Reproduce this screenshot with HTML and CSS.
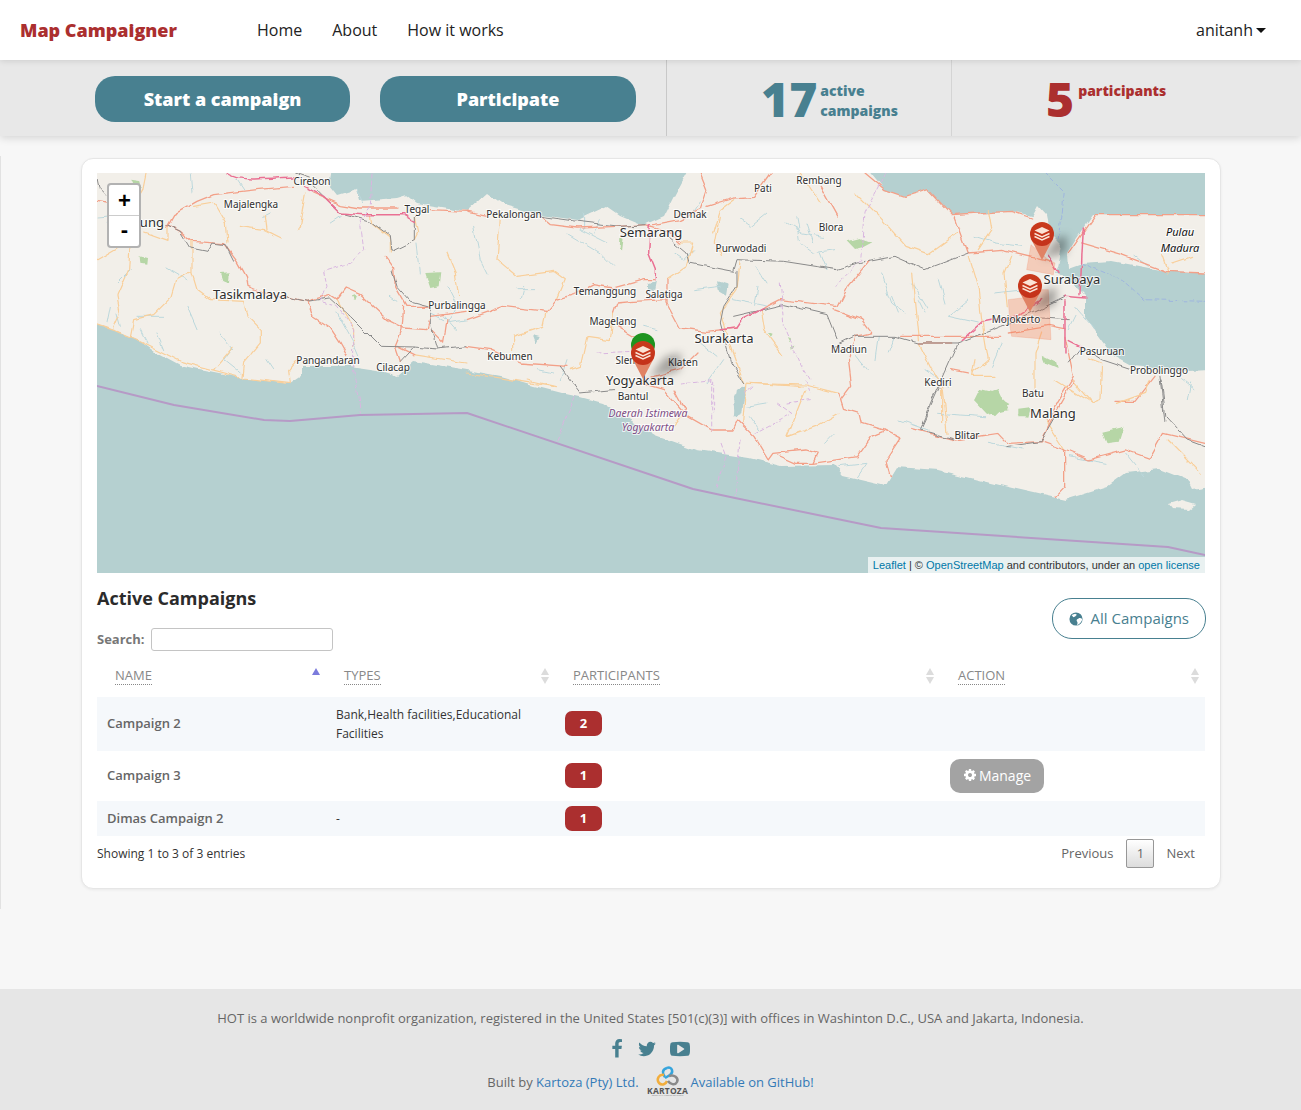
FILE: index.html
```html
<!DOCTYPE html>
<html lang="en">
<head>
  <meta charset="UTF-8">
  <meta name="viewport" content="width=device-width, initial-scale=1.0">
  <title>Map Campaigner</title>
  <link rel="stylesheet" href="styles.css">
</head>
<body>

  <nav class="navbar">
    <a class="brand" href="#">Map Campaigner</a>
    <ul class="nav-links">
      <li><a href="#">Home</a></li>
      <li><a href="#">About</a></li>
      <li><a href="#">How it works</a></li>
    </ul>
    <a class="user-menu" href="#">anitanh<span class="caret"></span></a>
  </nav>

  <div class="stats-bar">
    <div class="stats-actions">
      <a class="big-btn" href="#">Start a campaign</a>
      <a class="big-btn" href="#">Participate</a>
    </div>
    <div class="stat stat-active">
      <span class="stat-number">17</span>
      <span class="stat-label">active<br>campaigns</span>
    </div>
    <div class="stat stat-people">
      <span class="stat-number">5</span>
      <span class="stat-label">participants</span>
    </div>
  </div>

  <div class="content">
    <div class="card">

      <div class="map">
        <svg class="map-svg" viewBox="0 0 1108 400" width="1108" height="400">
          <defs>
            <filter id="blur-shadow" x="-50%" y="-50%" width="200%" height="200%"><feGaussianBlur stdDeviation="4"></feGaussianBlur></filter>
            <filter id="wobble" filterUnits="userSpaceOnUse" x="-6" y="-6" width="1120" height="412">
              <feTurbulence type="fractalNoise" baseFrequency="0.07" numOctaves="2" seed="4" result="noise"></feTurbulence>
              <feDisplacementMap in="SourceGraphic" in2="noise" scale="6" xChannelSelector="R" yChannelSelector="G"></feDisplacementMap>
              <feGaussianBlur stdDeviation="0.35"></feGaussianBlur>
            </filter>
            <linearGradient id="pin-head" x1="0" y1="0" x2="0" y2="1">
              <stop offset="0" stop-color="#c93a1c"></stop>
              <stop offset="1" stop-color="#c4321a"></stop>
            </linearGradient>
            <g id="pin">
              <path class="pin-tail" d="M-11 5 L0 26 L11 5 Z"></path>
              <circle r="12" fill="url(#pin-head)"></circle>
              <path class="pin-layer" d="M0 -7 L7.500 -3.500 L0 0 L-7.500 -3.500 Z"></path>
              <path class="pin-layer-line" d="M-7.500 -.5 L0 3 L7.500 -.5 M-7.500 2.500 L0 6 L7.500 2.500"></path>
            </g>
          </defs>

          <rect class="land" width="1108" height="400"></rect>

          <g filter="url(#wobble)">
            <!-- sea -->
            <path class="sea" d="M235 -5 L232 13 L240 23 L260 17 L263 28 L300 25 L310 22 L320 30 L370 38 L390 20 L407 32 L443 42 L480 47 L510 33 L523 42 L547 52 L567 43 L577 23 L592 -5 Z"></path>
            <path class="sea" d="M770 -5 L788 17 L808 23 L831 17 L855 42 L881 40 L915 38 L935 43 L941 32 L951 43 L955 63 L965 73 L961 93 L958 100 L978 113 L988 123 L988 143 L1001 163 L1015 182 L1035 193 L1091 198 L1113 197 L1113 100 L1068 98 L1015 88 L985 90 L971 95 L970 80 L978 67 L995 42 L1038 42 L1113 42 L1113 -5 Z"></path>
            <path class="sea" d="M-5 150 L20 158 L43 168 L57 178 L83 192 L97 195 L147 205 L193 211 L205 203 L205 193 L253 193 L280 197 L300 203 L317 188 L370 197 L403 203 L417 207 L437 213 L464 220 L483 224 L506 230 L530 245 L558 262 L600 277 L652 285 L685 293 L737 292 L746 302 L789 312 L800 294 L841 297 L911 314 L968 327 L1010 314 L1029 300 L1062 296 L1090 307 L1095 317 L1113 314 L1113 405 L-5 405 Z"></path>
            <path class="land" d="M1071 331 L1085 327 L1099 331 L1092 337 L1075 336 Z"></path>

            <!-- west tiles -->
            <g transform="scale(.3333)">
              <path class="park" d="M100 20 L130 25 L135 50 L110 45 Z M128 250 L150 255 L148 275 L130 272 Z M372 300 L395 298 L393 330 L380 325 Z M985 300 L1030 298 L1025 340 L1000 345 Z M765 370 L778 365 L772 382 Z"></path>
              <path class="rv" d="M0 135 L60 130 L30 150 M210 285 L270 320 M270 400 L300 470 M370 480 L410 530 M410 520 L380 560 L430 600 M510 560 L530 590 M720 420 L770 510 L785 545 M100 290 L60 330 M40 400 L30 450 M60 420 L70 460 M120 430 L200 430 M130 470 L150 510 M180 480 L200 530 M1050 340 L1080 400 L1050 450 L1110 440 M960 210 L970 300 M880 370 L900 385 M700 150 L730 130 M500 130 L520 120 M420 20 L440 50 M280 0 L285 60 M780 50 L800 90 M1040 430 L1075 470 M1000 420 L1040 440"></path>
              <path class="sec" d="M350 90 L385 150 L390 210 M285 205 L285 300 L300 350 L340 380 L440 385 L450 430 L490 470 L490 510 L440 570 L435 610 M285 295 L240 320 L225 370 L170 425 L110 440 L100 490 M100 200 L95 290 L60 370 L70 420 L50 465 M430 160 L500 170 L550 195 M505 125 L510 170 M625 60 L605 170 M210 160 L210 205 L140 180 M410 520 L350 590 M580 630 L575 590 L600 560 M1050 240 L1075 300 L1085 370 M820 125 L825 150 L880 195 L880 240 M955 130 L965 180 L955 200 M950 545 L1110 570 M0 260 L60 225 M350 90 L290 100 M720 378 L770 470 L770 520 M0 455 L60 475 L130 505 L250 565 L440 615 L580 632 M150 0 L140 50 L100 120"></path>
              <path class="rd" d="M210 160 L230 125 L300 85 L350 65 L480 50 L590 40 M210 155 L250 175 L285 205 L380 212 L420 265 L445 310 L450 340 L510 365 L570 372 L630 385 L700 365 L720 378 L745 345 L790 365 L870 440 L920 465 L990 470 L1000 430 L1110 415 M630 385 L645 430 L700 465 L730 510 L750 545 M920 400 L915 470 L895 520 L910 565 M865 250 L890 285 L895 340 L930 400 L1000 400 M1000 470 L1040 510 L1050 440 M0 85 L30 90 M650 60 L730 95 L790 105 L900 105 M950 545 L900 520 M1000 110 L1110 115"></path>
              <path class="rl" d="M650 40 L730 120 L820 145 L880 190 L885 235 L955 200 L955 130 M210 155 L250 175 L280 225 L330 235 L345 210 L385 215 L410 265 M570 372 L630 385 L700 375 L760 430 L850 520 L950 522 L1020 528 L1110 518 M885 290 L900 340 L940 385 L1000 400 L1000 460 L1020 528 M950 522 L910 565 M0 0 L10 50 L30 70 M595 0 L640 15"></path>
              <path class="mw" d="M390 0 Q420 20 470 18 T590 12 M620 40 L680 70 L730 120 L800 125 L920 125 L955 145"></path>
              <path class="bd" d="M825 0 L820 100 L790 145 L800 230 L760 270 L680 295 L690 340 L670 385 L720 400 L770 470 L770 590 L790 720"></path>
            </g>

            <!-- middle tiles -->
            <g transform="translate(370,0) scale(.3333)">
              <path class="park" d="M460 195 L470 195 L465 235 L458 225 Z M960 490 L972 492 L968 505 Z M905 480 L920 485 L915 495 Z M975 515 L985 520 L978 530 Z"></path>
              <path class="lake" d="M545 330 L570 325 L565 350 L548 350 Z M750 325 L785 335 L780 365 L755 350 Z M195 490 L215 495 L205 515 Z M810 650 L840 640 L830 700 L800 730 Z"></path>
              <path class="rv" d="M150 350 L200 350 M170 340 L160 380 M300 180 L400 240 L440 280 M340 170 L420 210 M350 120 L350 170 M400 140 L380 180 M620 240 L650 260 L680 230 M680 350 L760 340 M800 380 L900 400 M870 340 L860 400 M960 150 L1010 180 L1070 190 M1000 210 L1040 240 L1100 230 M1060 240 L1080 290 M680 120 L700 90 M820 140 L850 160 L900 120 M20 160 L40 260 L60 300 M700 510 L750 550 M720 630 L770 560 M840 700 L900 690 M210 590 L260 600 M530 460 L570 470 M300 560 L280 620 M990 130 L1000 200 M1020 150 L1040 210 M870 280 L900 330"></path>
              <path class="sec" d="M100 130 L90 260 L150 310 L260 295 L295 320 L270 380 M240 415 L230 460 L140 490 L140 530 M640 210 L680 210 L660 280 L600 320 M760 130 L745 210 L760 250 M820 260 L810 350 L760 420 L780 490 L830 630 L1000 640 M0 600 L260 640 M800 80 L760 110 L740 180 M1000 0 L1060 90 M840 630 L830 750 M440 420 L430 500 L360 490 L340 580 L310 590 M880 410 L890 470 L950 550"></path>
              <path class="rd" d="M0 118 L60 130 M220 130 L250 155 L330 165 L450 160 L540 155 M540 155 L600 175 L640 210 M0 440 L110 400 L240 415 L270 380 L320 365 L380 335 L440 345 L530 320 L560 320 M600 320 L600 390 L640 465 L720 475 L810 465 M880 410 L940 380 L1110 400 M0 520 L70 530 L160 570 L300 580 M440 420 L450 390 L500 385 L600 380 M690 540 L640 590 L560 610 L520 630 L590 650 L650 720 M700 0 L720 50 L700 110 L640 140 L560 155 M720 100 L800 75 L860 70 L910 0 M1060 40 L1110 130 M450 460 L500 490"></path>
              <path class="rl" d="M220 130 L330 145 L460 160 L540 155 M600 190 L660 240 L670 270 L800 295 L810 260 L950 265 L1110 290 M810 295 L810 340 L770 400 L760 450 L790 560 L830 630 M800 430 L950 395 L1080 425 L1110 500 M280 580 L340 660 L440 650"></path>
              <path class="mw" d="M550 155 L545 240 L565 290 L565 320 M760 470 L810 465 L830 435 L890 405"></path>
              <path class="bd" d="M940 330 L950 450 L1000 570 L1030 620 M390 540 L500 535 M640 630 L740 620 L740 720 M960 690 L1030 680 M800 690 L860 640"></path>
            </g>

            <!-- east tiles -->
            <g transform="translate(738,0) scale(.3333)">
              <path class="park" d="M38 205 L75 195 L112 208 L85 222 L60 228 Z M620 545 L660 565 L665 585 L630 570 Z M430 650 L470 660 L520 690 L480 730 L440 700 L415 680 Z M550 710 L590 705 L580 730 L550 730 Z"></path>
              <path class="rv" d="M140 300 L170 390 L210 420 M230 330 L280 410 M310 320 L330 390 M400 380 L340 430 L430 450 M480 360 L570 350 M420 190 L480 210 L560 220 M60 540 L100 590 M130 490 L120 560 M180 490 L160 540 M270 590 L340 640 M470 580 L500 510 M720 400 L780 470 M720 430 L700 470 M900 250 L940 280 M1040 620 L1080 650 M1070 630 L1060 680 M250 380 L270 420 M170 370 L190 420"></path>
              <path class="sec" d="M60 60 L130 130 L210 220 L280 245 L370 180 M230 300 L250 500 M400 250 L430 350 L440 440 L460 560 L410 600 M530 250 L510 300 L520 400 M620 480 L600 540 L600 650 M460 110 L470 170 L430 230 M760 555 L800 570 L795 680 L770 690 L710 620 M980 245 L1000 300 M1010 270 L1070 250 M250 510 L290 590 L320 640 L320 750 M420 560 L410 610 L480 610"></path>
              <path class="rd" d="M0 410 L80 440 L110 480 L60 490 L40 560 L50 640 L20 680 M400 240 L500 232 L640 265 M360 130 L400 240 M90 0 L150 50 L210 70 L280 50 L350 125 L430 120 L530 115 L590 135 M200 490 L500 490 M690 490 L715 610 L660 700 L640 750 M960 610 L900 685 L840 685 M700 240 L780 125 L1110 125 M740 210 L860 245 L990 295 L1110 300 M100 265 L40 340 L10 400 M350 590 L400 600 M250 510 L350 510 M520 480 L640 460 L690 470"></path>
              <path class="rl" d="M100 265 L180 250 L270 290 L400 240 M0 520 L60 490 L180 490 L250 510 L370 510 L500 460 L690 370 M370 510 L330 600 L265 750 M975 610 L990 750 M700 570 L740 520 L800 560 L890 590 M620 435 L700 440 M0 290 L90 265"></path>
              <path class="mw" d="M385 500 L440 450 L540 430 L620 380 M690 370 L750 375 M690 380 L690 540 M700 500 L740 520 M640 250 L670 300 M745 165 L735 365"></path>
              <path class="bd" d="M150 0 L90 120 L80 260 L0 340"></path>
              <path class="ocean-line" d="M630 0 L685 55 L670 200 M740 270 L860 320 L930 380 L1110 385"></path>
            </g>

            <!-- south tiles -->
            <g transform="translate(370,207) scale(.4706,.3333)">
              <path class="park" d="M1075 60 L1130 30 L1150 90 L1105 105 Z M1180 90 L1200 85 L1195 110 L1170 105 Z M1350 155 L1395 140 L1385 185 L1360 190 Z"></path>
              <path class="lake" d="M565 50 L590 30 L585 100 L570 110 Z"></path>
              <path class="rv" d="M790 260 L850 250 L830 290 M760 190 L780 160 M920 120 L980 150 M1110 190 L1180 210 M1280 230 L1360 250 M1400 220 L1440 290 M600 110 L620 150 M1000 100 L1100 110"></path>
              <path class="sec" d="M1010 30 L1020 160 M720 30 L680 170 L740 140 L790 100 M590 10 L720 15 L790 40 M1250 0 L1330 70 M1450 0 L1440 40 L1380 70 M1490 180 L1560 280 M1220 100 L1270 210 M440 140 L460 100 M130 0 L190 20"></path>
              <path class="rd" d="M790 40 L800 85 L835 100 L840 130 L885 150 L920 175 L890 240 L900 290 M640 240 L650 220 L720 210 L745 220 L735 250 L700 250 L660 225 M735 250 L830 230 L860 170 L885 155 M440 30 L470 110 L520 150 L565 150 L575 120 L610 170 L640 240 M945 145 L1035 180 L1130 160 L1150 190 L1220 185 L1270 210 L1320 240 L1400 210 L1450 235 L1480 160 L1568 190 M1270 210 L1270 320 L1250 350 M1220 185 L1250 100 L1290 0"></path>
              <path class="rl" d="M1005 25 L965 150 L1035 178 M1145 200 L1220 185 L1250 110 M1475 0 L1485 110 L1530 180 L1568 200"></path>
              <path class="bd" d="M230 50 L190 180 M540 190 L550 230 L530 330 M580 180 L570 350 M520 0 L520 150 M660 70 L690 100 L610 160 M720 0 L730 40"></path>
            </g>
          </g>

          <!-- sea border stays straight -->
          <path class="border" d="M0 213 L77 232 L167 247 L193 248 L263 242 L370 240 L596 316 L638 325 L784 355 L1071 374 L1108 382"></path>

          <!-- campaign areas -->
          <g transform="translate(738,0) scale(.3333)">
            <path class="campaign-area" d="M588 215 L640 260 L660 270 L655 305 L575 290 Z"></path>
            <path class="campaign-area" d="M520 380 L600 370 L620 350 L640 350 L648 500 L530 490 L525 460 Z"></path>
          </g>

          <!-- place names -->
          <g class="labels">
            <text class="lb-big" x="39" y="54">Bandung</text>
            <text x="215" y="12">Cirebon</text>
            <text x="154" y="35">Majalengka</text>
            <text x="320" y="40">Tegal</text>
            <text x="417" y="45">Pekalongan</text>
            <text x="666" y="19">Pati</text>
            <text x="722" y="11">Rembang</text>
            <text x="593" y="45">Demak</text>
            <text x="734" y="58">Blora</text>
            <text x="644" y="79">Purwodadi</text>
            <text class="lb-big" x="554" y="64">Semarang</text>
            <text class="lb-big" x="153" y="126">Tasikmalaya</text>
            <text x="360" y="136">Purbalingga</text>
            <text x="508" y="122">Temanggung</text>
            <text x="567" y="125">Salatiga</text>
            <text x="516" y="152">Magelang</text>
            <text class="lb-big" x="627" y="170">Surakarta</text>
            <text x="752" y="180">Madiun</text>
            <text x="586" y="193">Klaten</text>
            <text x="231" y="191">Pangandaran</text>
            <text x="296" y="198">Cilacap</text>
            <text x="413" y="187">Kebumen</text>
            <text x="536" y="191">Sleman</text>
            <text class="lb-big" x="543" y="212">Yogyakarta</text>
            <text x="536" y="227">Bantul</text>
            <text class="lb-region" x="551" y="244">Daerah Istimewa</text>
            <text class="lb-region" x="551" y="258">Yogyakarta</text>
            <text x="841" y="213">Kediri</text>
            <text x="936" y="224">Batu</text>
            <text class="lb-big" x="956" y="245">Malang</text>
            <text x="870" y="266">Blitar</text>
            <text class="lb-big" x="975" y="111">Surabaya</text>
            <text x="919" y="150">Mojokerto</text>
            <text x="1005" y="182">Pasuruan</text>
            <text x="1062" y="201">Probolinggo</text>
            <text class="lb-island" x="1083" y="63">Pulau</text>
            <text class="lb-island" x="1083" y="79">Madura</text>
          </g>

          <!-- campaign markers -->
          <path class="pin-shadow" d="M552 205 L568 184 L584 180 L582 198 Z"></path>
          <path class="pin-shadow" d="M945 86 L958 66 L970 62 L970 80 Z"></path>
          <path class="pin-shadow" d="M933 139 L948 118 L960 114 L958 132 Z"></path>
          <circle class="pin-green" cx="546" cy="172" r="12"></circle>
          <use href="#pin" x="546" y="180"></use>
          <use href="#pin" x="945" y="61"></use>
          <use href="#pin" x="933" y="113"></use>
        </svg>

        <div class="zoom-control">
          <a class="zoom-btn" href="#">+</a>
          <a class="zoom-btn" href="#">-</a>
        </div>
        <div class="attribution">
          <a href="#">Leaflet</a> | © <a href="#">OpenStreetMap</a> and contributors, under an <a href="#">open license</a>
        </div>
      </div>

      <div class="table-head">
        <div>
          <h3 class="table-title">Active Campaigns</h3>
          <label class="search"><span class="search-text">Search:</span> <input class="search-input" type="text"></label>
        </div>
        <a class="outline-btn" href="#">
          <svg class="globe" viewBox="0 0 16 16" width="14" height="14">
            <circle cx="8" cy="8" r="7.500" fill="#488090"></circle>
            <path d="M9 15 C12 14 15 11 15 8 C14 7 12 6.500 11 7.500 C9.500 8 8 9 9 10.500 C10 11.500 10 13 9 15 Z M3 3.500 L7 2 L9 3 L7 5 L5 6 Z" fill="#fff"></path>
          </svg>
          <span class="outline-text">All Campaigns</span>
        </a>
      </div>

      <table class="campaigns">
        <thead>
          <tr>
            <th class="sorted-asc"><abbr>Name</abbr></th>
            <th><abbr>Types</abbr></th>
            <th><abbr>Participants</abbr></th>
            <th><abbr>Action</abbr></th>
          </tr>
        </thead>
        <tbody>
          <tr class="odd">
            <td class="name">Campaign 2</td>
            <td class="types">Bank,Health facilities,Educational Facilities</td>
            <td class="count"><span class="badge">2</span></td>
            <td></td>
          </tr>
          <tr>
            <td class="name">Campaign 3</td>
            <td class="types"></td>
            <td class="count"><span class="badge">1</span></td>
            <td>
              <a class="manage-btn" href="#">
                <svg viewBox="0 0 1792 1792" width="14" height="14"><path fill="#fff" d="M1152 896q0-106-75-181t-181-75-181 75-75 181 75 181 181 75 181-75 75-181zm512-109v222q0 12-8 23t-20 13l-185 28q-19 54-39 91 35 50 107 138 10 12 10 25t-9 23q-27 37-99 108t-94 71q-12 0-26-9l-138-108q-44 23-91 38-16 136-29 186-7 28-36 28h-222q-14 0-24.500-8.500t-11.500-21.500l-28-184q-49-16-90-37l-141 107q-10 9-25 9-14 0-25-11-126-114-165-168-7-10-7-23 0-12 8-23 15-21 51-66.500t54-70.500q-27-50-41-99l-183-27q-13-2-21-12.500t-8-23.500v-222q0-12 8-23t19-13l186-28q14-46 39-92-40-57-107-138-10-12-10-24 0-10 9-23 26-36 98.500-107.500t94.500-71.500q13 0 26 10l138 107q44-23 91-38 16-136 29-186 7-28 36-28h222q14 0 24.500 8.500t11.500 21.500l28 184q49 16 90 37l142-107q9-9 24-9 13 0 25 10 129 119 165 170 7 8 7 22 0 12-8 23-15 21-51 66.500t-54 70.500q26 50 41 98l183 28q13 2 21 12.500t8 23.500z"></path></svg>
                Manage
              </a>
            </td>
          </tr>
          <tr class="odd">
            <td class="name">Dimas Campaign 2</td>
            <td class="types">-</td>
            <td class="count"><span class="badge">1</span></td>
            <td></td>
          </tr>
        </tbody>
      </table>

      <div class="table-foot">
        <span class="entries">Showing 1 to 3 of 3 entries</span>
        <div class="pagination">
          <a href="#">Previous</a>
          <a class="current" href="#">1</a>
          <a href="#">Next</a>
        </div>
      </div>

    </div>
  </div>

  <footer class="footer">
    <p class="footer-text">HOT is a worldwide nonprofit organization, registered in the United States [501(c)(3)] with offices in Washinton D.C., USA and Jakarta, Indonesia.</p>
    <div class="social">
      <svg viewBox="0 0 1792 1792" width="20" height="20"><path d="M1343 12v264h-157q-86 0-116 36t-30 108v189h293l-39 296h-254v759h-306v-759h-255v-296h255v-218q0-186 104-288.500t277-102.500q147 0 228 12z"></path></svg>
      <svg viewBox="0 0 1792 1792" width="20" height="20"><path d="M1684 408q-67 98-162 167 1 14 1 42 0 130-38 259.500t-115.500 248.500-184.500 210.500-258 146-323 54.500q-271 0-496-145 35 4 78 4 225 0 401-138-105-2-188-64.500t-114-159.500q33 5 61 5 43 0 85-11-112-23-185.500-111.500t-73.500-205.500v-4q68 38 146 41-66-44-105-115t-39-154q0-88 44-163 121 149 294.500 238.500t371.500 99.500q-8-38-8-74 0-134 94.500-228.500t228.500-94.500q140 0 236 102 109-21 205-78-37 115-142 178 91-10 186-50z"></path></svg>
      <svg viewBox="0 0 1792 1792" width="20" height="20"><path d="M1280 896q0-37-30-54l-512-320q-31-20-65-2-33 18-33 56v640q0 38 33 56 16 8 31 8 20 0 34-10l512-320q30-17 30-54zm512 0q0 96-1 150t-8.500 136.500-22.500 147.500q-16 73-69 123t-124 58q-222 25-671 25t-671-25q-71-8-124.500-58t-69.500-123q-14-65-21.500-147.500t-8.500-136.500-1-150 1-150 8.500-136.500 22.500-147.500q16-73 69-123t124-58q222-25 671-25t671 25q71 8 124.500 58t69.500 123q14 65 21.500 147.500t8.500 136.500 1 150z"></path></svg>
    </div>
    <div class="built-by">
      <span class="built-text">Built by <a href="#">Kartoza (Pty) Ltd.</a></span>
      <span class="kartoza-logo">
        <svg viewBox="2 0 40 22" width="40" height="22">
          <path d="M21 3 C26 1 28 7 24 10 L19 13" fill="none" stroke="#35a4dc" stroke-width="2.500"></path>
          <path d="M21 3 C16 4 16 9 19 12" fill="none" stroke="#35a4dc" stroke-width="2.500"></path>
          <path d="M18 10 C13 9 10 14 13 18 C16 21 20 19 21 16" fill="none" stroke="#f2ae3d" stroke-width="2.500"></path>
          <path d="M23 11 C28 9 33 13 31 17 C29 21 24 19 22 16" fill="none" stroke="#8a8a8a" stroke-width="2.500"></path>
        </svg>
        <b class="kartoza-name">KARTOZA</b>
        <i class="kartoza-sub">GEOSPATIAL WEBSITE SOLUTIONS</i>
      </span>
      <a class="built-text" href="#">Available on GitHub!</a>
    </div>
  </footer>

</body>
</html>
```

FILE: styles.css
```css
* {
  box-sizing: border-box;
}

body {
  margin: 0;
  background: #f7f7f7;
  font-family: 'Open Sans', sans-serif;
  font-size: 13px;
  color: #333333;
}

a {
  text-decoration: none;
}

/* top navigation */
.navbar {
  position: relative;
  z-index: 2;
  display: flex;
  align-items: center;
  height: 60px;
  padding: 0 35px 0 20px;
  background: #ffffff;
  box-shadow: 0 1px 6px rgba(0, 0, 0, 0.12);
}

.brand {
  width: 237px;
  font-size: 18px;
  font-weight: 800;
  color: #ab2f2f;
}

.nav-links {
  display: flex;
  gap: 30px;
  margin: 0;
  padding: 0;
  list-style: none;
}

.nav-links a,
.user-menu {
  font-size: 16px;
  color: #222222;
}

.user-menu {
  margin-left: auto;
}

.caret {
  display: inline-block;
  margin-left: 3px;
  vertical-align: 3px;
  border-top: 5px solid #111111;
  border-left: 5px solid transparent;
  border-right: 5px solid transparent;
}

/* buttons and counters */
.stats-bar {
  position: relative;
  z-index: 1;
  display: flex;
  height: 76px;
  background: #e8e8e8;
  box-shadow: 0 2px 8px rgba(0, 0, 0, 0.14);
}

.stats-actions {
  display: flex;
  gap: 30px;
  width: 666px;
  padding: 16px 0 0 95px;
}

.big-btn {
  width: 255px;
  height: 46px;
  border-radius: 20px;
  background: #488090;
  color: #ffffff;
  font-size: 18px;
  font-weight: 800;
  line-height: 46px;
  text-align: center;
}

.big-btn + .big-btn {
  width: 256px;
}

.stat {
  display: flex;
  align-items: flex-start;
  padding: 0 0 0 94px;
  border-left: 1px solid #c8c8c8;
}

.stat-active {
  width: 285px;
  color: #488090;
}

.stat-people {
  flex: 1;
  border-left-color: #d4d4d4;
  color: #ab2f2f;
}

.stat-number {
  font-size: 48px;
  font-weight: 800;
  line-height: 78px;
}

.stat-label {
  margin: 21px 0 0 3px;
  font-size: 14px;
  font-weight: 800;
  line-height: 20px;
}

.stat-people .stat-label {
  margin-left: 4px;
}

/* main card */
.content {
  margin: 20px 0 80px;
  padding: 2px 0 20px 80px;
  border-left: 1px solid #e2e2e2;
}

.card {
  width: 1140px;
  padding: 14px 15px 20px;
  border: 1px solid #e6e6e6;
  border-radius: 12px;
  background: #ffffff;
  box-shadow: 0 1px 3px rgba(0, 0, 0, 0.06);
}

.map {
  position: relative;
  width: 1108px;
  height: 400px;
  overflow: hidden;
}

.map-svg {
  display: block;
}

.land { fill: #f2efe9; }
.sea { fill: #b5d0d0; }
.lake { fill: #b5d0d0; }
.park { fill: #b6d6a6; }

.rd, .sec, .rl, .mw, .rv, .bd, .border, .ocean-line {
  fill: none;
  vector-effect: non-scaling-stroke;
  stroke-linejoin: round;
  stroke-linecap: round;
}

.rv { stroke: #bcd8dc; stroke-width: 1; }
.sec { stroke: #f9cf9a; stroke-width: 1.2; }
.rd { stroke: #f3a088; stroke-width: 1.3; }
.rl { stroke: #8a8a8a; stroke-width: 1; }
.mw { stroke: #ea7093; stroke-width: 1.5; }
.bd { stroke: #d9b6e0; stroke-width: 1; stroke-dasharray: 4 3; }
.border { stroke: #b69ac6; stroke-width: 2; }
.ocean-line { stroke: #9fb6df; stroke-width: 1; stroke-dasharray: 4 3; }
.campaign-area { fill: #f47a50; fill-opacity: 0.3; stroke: #f47a50; stroke-opacity: 0.2; vector-effect: non-scaling-stroke; }

.labels text {
  font-family: 'Noto Sans', sans-serif;
  font-size: 10px;
  fill: #2e2e2e;
  text-anchor: middle;
  stroke: rgba(255, 255, 255, 0.75);
  stroke-width: 2px;
  paint-order: stroke;
}

.labels .lb-big {
  font-size: 13px;
}

.labels .lb-region {
  font-size: 10.5px;
  font-style: italic;
  fill: #7d4d85;
}

.labels .lb-island {
  font-size: 11px;
  font-style: italic;
  fill: #111111;
}

.pin-tail { fill: #e08264; }
.pin-layer { fill: #fbe3d6; }
.pin-layer-line { fill: none; stroke: #fbe3d6; stroke-width: 1.4; }
.pin-green { fill: #1e9420; }
.pin-shadow { fill: #000000; fill-opacity: 0.32; filter: url(#blur-shadow); }

.zoom-control {
  position: absolute;
  top: 10px;
  left: 10px;
  width: 34px;
  border: 2px solid rgba(0, 0, 0, 0.3);
  border-radius: 4px;
  background: #ffffff;
}

.zoom-btn {
  display: block;
  height: 30px;
  padding-left: 1px;
  color: #000000;
  font-family: 'Liberation Sans', sans-serif;
  font-size: 22px;
  font-weight: 700;
  line-height: 31px;
  text-align: center;
}

.zoom-btn + .zoom-btn {
  height: 31px;
  border-top: 1px solid #cccccc;
  line-height: 27px;
}

.attribution {
  position: absolute;
  right: 0;
  bottom: 0;
  height: 16px;
  padding: 0 5px;
  background: rgba(255, 255, 255, 0.7);
  color: #333333;
  font-family: 'Liberation Sans', sans-serif;
  font-size: 11px;
  line-height: 16px;
}

.attribution a {
  color: #0078a8;
}

/* table header row */
.table-head {
  display: flex;
  justify-content: space-between;
  height: 82px;
  margin-right: -1px;
}

.table-title {
  margin: 13px 0 17px;
  font-size: 18px;
  font-weight: 700;
  line-height: 25px;
  color: #2b2b2b;
}

.search {
  display: flex;
  align-items: center;
  gap: 6px;
  font-weight: 700;
  color: #777777;
}

.search-text {
  margin-bottom: 2px;
}

.search-input {
  width: 182px;
  height: 23px;
  padding: 0 4px;
  border: 1px solid #c4c4c4;
  border-radius: 3px;
  background: #ffffff;
}

.outline-btn {
  display: flex;
  align-items: center;
  gap: 8px;
  height: 41px;
  margin-top: 25px;
  padding: 0 16px;
  border: 1px solid #488090;
  border-radius: 20px;
  color: #488090;
  font-size: 15px;
}

.outline-text {
  margin-bottom: 2px;
}

/* campaigns table */
.campaigns {
  width: 1108px;
  border-collapse: collapse;
  table-layout: fixed;
}

.campaigns th {
  position: relative;
  height: 42px;
  padding: 0 18px 2px;
  font-size: 13px;
  font-weight: 400;
  text-align: left;
}

.campaigns th:nth-child(1) { width: 229px; }
.campaigns th:nth-child(2) { width: 229px; }
.campaigns th:nth-child(3) { width: 385px; }

.campaigns abbr {
  color: #888888;
  text-transform: uppercase;
  border-bottom: 1px dotted #888888;
}

/* sort arrows */
.campaigns th::before,
.campaigns th::after {
  content: "";
  position: absolute;
  right: 6px;
  border-left: 4px solid transparent;
  border-right: 4px solid transparent;
}

.campaigns th::before {
  top: 13px;
  border-bottom: 7px solid #dcdcdc;
}

.campaigns th::after {
  top: 22px;
  border-top: 7px solid #dcdcdc;
}

.campaigns .sorted-asc::before {
  border-bottom-color: #7b7bdc;
}

.campaigns .sorted-asc::after {
  display: none;
}

.campaigns td {
  padding: 7px 10px 9px;
  line-height: 19px;
  color: #333333;
  vertical-align: middle;
}

.campaigns .odd td {
  background: #f5f8fb;
}

.campaigns .name {
  font-weight: 600;
  color: #666666;
}

.campaigns .odd:last-child .name {
  padding: 8px 10px;
}

.campaigns .types {
  padding: 8px 10px;
  font-size: 12px;
}

.campaigns .count {
  padding: 7px 10px 8px;
}

.badge {
  display: inline-block;
  width: 37px;
  height: 25px;
  margin: -3px 0;
  border-radius: 7px;
  background: #ab2f2f;
  color: #ffffff;
  font-weight: 700;
  line-height: 25px;
  text-align: center;
  vertical-align: top;
}

.manage-btn {
  display: inline-flex;
  align-items: center;
  justify-content: center;
  gap: 2px;
  width: 94px;
  height: 34px;
  margin: 1px 0 -1px;
  padding-bottom: 2px;
  border-radius: 10px;
  background: #a3a3a3;
  color: #ffffff;
  font-size: 14px;
  vertical-align: top;
}

.table-foot {
  display: flex;
  justify-content: space-between;
  align-items: center;
  margin-top: 3px;
  padding-right: 10px;
}

.entries {
  font-size: 12px;
}

.pagination {
  display: flex;
  align-items: center;
  gap: 12px;
}

.pagination a {
  margin-bottom: 2px;
  color: #666666;
}

.pagination .current {
  width: 28px;
  height: 29px;
  margin: 0 0 0 1px;
  border: 1px solid #979797;
  border-radius: 2px;
  background: linear-gradient(to bottom, #ffffff, #dcdcdc);
  line-height: 26px;
  text-align: center;
}

/* footer */
.footer {
  height: 121px;
  padding-top: 20px;
  background: #e6e6e6;
  color: #666666;
  text-align: center;
}

.footer-text {
  margin: 0;
  line-height: 18px;
}

.social {
  display: flex;
  justify-content: center;
  gap: 10px;
  height: 20px;
  margin-top: 12px;
  padding-right: 5px;
}

.social svg {
  fill: #488090;
}

.social svg:last-child {
  margin-left: 3px;
}

.built-by {
  display: flex;
  justify-content: center;
  align-items: center;
  margin-top: 6px;
}

.built-by a {
  color: #337ab7;
}

.built-text {
  padding-top: 2px;
}

.kartoza-logo {
  display: flex;
  flex-direction: column;
  align-items: center;
  width: 40px;
  margin: 0 3px 0 9px;
}

.kartoza-name {
  font-size: 8.5px;
  line-height: 8px;
  letter-spacing: 0.2px;
  color: #555555;
}

.kartoza-sub {
  font-size: 2px;
  font-style: normal;
  line-height: 2px;
  color: #888888;
  white-space: nowrap;
}
```
